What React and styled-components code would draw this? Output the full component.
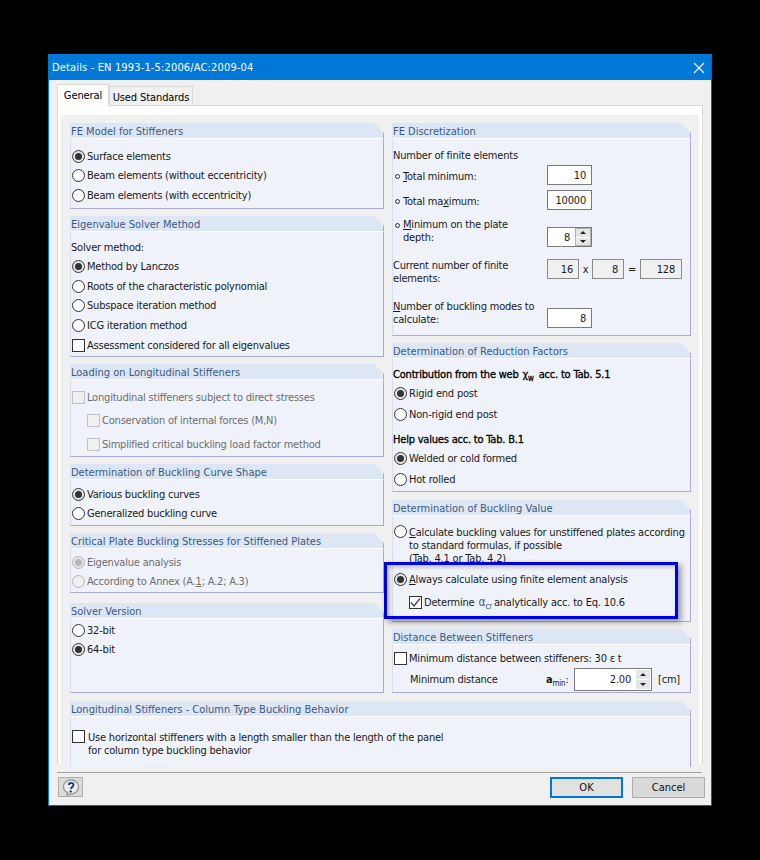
import React from 'react';
import styled, { createGlobalStyle } from 'styled-components';

const GlobalStyle = createGlobalStyle`
    html, body {
        margin: 0;
        background: #000;
        font-family: "DejaVu Sans Condensed", "Liberation Sans", Arial, sans-serif;
        font-size: 11px;
        color: #1a1a1a;
    }
`;

const Page = styled.div`
    padding: 54px 48px;
    width: 664px;
    height: 752px;
`;

const Dialog = styled.div`
    position: relative;
    box-sizing: border-box;
    width: 664px;
    height: 752px;
    background: #f0f0f0;
    border: 1px solid #0078d7;
    border-bottom-color: #1b5e96;
    border-right-color: #1b5e96;
    display: flex;
    flex-direction: column;
`;

const TitleBar = styled.div`
    height: 25px;
    background: #0078d7;
    color: #fff;
    display: flex;
    align-items: center;
    justify-content: space-between;
    padding: 0 5px 0 3px;
    flex-shrink: 0;
`;

const TitleText = styled.div`
    font-size: 11px;
    letter-spacing: 0.15px;
`;

const TabBar = styled.div`
    display: flex;
    align-items: flex-end;
    height: 25px;
    padding-left: 8px;
    flex-shrink: 0;
`;

const Tab = styled.div`
    box-sizing: border-box;
    display: flex;
    align-items: center;
    justify-content: center;
    white-space: nowrap;
    letter-spacing: -0.1px;
    border: 1px solid #d9d9d9;
    border-bottom: none;
    height: ${p => (p.$active ? '22px' : '19px')};
    width: ${p => (p.$active ? '52px' : '84px')};
    padding-top: ${p => (p.$active ? '0' : '2px')};
    background: ${p => (p.$active ? '#fff' : '#f0f0f0')};
    margin-bottom: ${p => (p.$active ? '-1px' : '0')};
    position: relative;
    z-index: ${p => (p.$active ? 1 : 0)};
    color: #000;
`;

const TabPane = styled.div`
    box-sizing: border-box;
    margin-left: 8px;
    width: 646px;
    height: 659px;
    background: #fff;
    border: 1px solid #d9d9d9;
    border-bottom: none;
    padding: 9px 3px 0;
    flex-shrink: 0;
`;

const PaneInner = styled.div`
    height: 650px;
    background: #f0f0f0;
    padding: 8px 8px 0 9px;
    box-sizing: border-box;
`;

const Columns = styled.div`
    display: flex;
    gap: 8px;
`;

const Column = styled.div`
    width: ${p => p.$width}px;
    display: flex;
    flex-direction: column;
`;

const GroupBox = styled.div`
    position: relative;
    box-sizing: border-box;
    height: ${p => p.$height}px;
    margin-bottom: ${p => p.$after ?? 7}px;
    display: flex;
    flex-direction: column;
`;

const GroupHeader = styled.div`
    box-sizing: border-box;
    height: 15px;
    flex-shrink: 0;
    background: linear-gradient(to left, #a9a9de 1px, #dce6f4 1px);
    clip-path: polygon(0 0, calc(100% - 10px) 0, 100% 10px, 100% 100%, 0 100%);
    color: #3a5a80;
    line-height: 17px;
    padding-left: 1px;
`;

const GroupBody = styled.div`
    flex: 1;
    box-sizing: border-box;
    background: #eff3f9;
    letter-spacing: -0.2px;
    border-top: 1px solid #fff;
    border-left: 1px solid #d5dff0;
    border-right: 1px solid #a9a9de;
    border-bottom: ${p => (p.$open ? 'none' : '1px solid #a9a9de')};
`;

const Row = styled.div`
    display: flex;
    align-items: ${p => (p.$top ? 'flex-start' : 'center')};
    height: ${p => p.$height ?? 18}px;
    margin-top: ${p => p.$mt ?? 0}px;
    margin-left: ${p => p.$indent ?? 0}px;
    color: ${p => (p.$disabled ? '#6d6d6d' : '#1a1a1a')};
    white-space: nowrap;
`;

const Lines = styled.div`
    line-height: 13px;
    white-space: nowrap;
    margin-left: ${p => p.$indent ?? 0}px;
`;

const BoldLabel = styled.span`
    color: #000;
    -webkit-text-stroke: 0.3px #000;
`;

const RadioCircle = styled.span`
    box-sizing: border-box;
    flex-shrink: 0;
    width: 13px;
    height: 13px;
    margin: ${p => (p.$raised ? '-1px' : '0')} 2px 0 1px;
    border-radius: 50%;
    border: 1px solid ${p => (p.$disabled ? '#b5b5b5' : '#333')};
    background: ${p => (p.$checked ? '#e6e6e6' : p.$disabled ? '#f0f0f0' : '#fff')};
    display: flex;
    align-items: center;
    justify-content: center;

    &::after {
        content: '';
        display: ${p => (p.$checked ? 'block' : 'none')};
        width: 7px;
        height: 7px;
        border-radius: 50%;
        background: ${p => (p.$disabled ? '#b5b5b5' : '#333')};
    }
`;

const CheckSquare = styled.span`
    box-sizing: border-box;
    flex-shrink: 0;
    width: 13px;
    height: 13px;
    margin: ${p => (p.$raised ? '-1px' : '0')} 2px 0 1px;
    border: 1px solid ${p => (p.$disabled ? '#c0c0c0' : '#333')};
    background: ${p => (p.$disabled ? '#f0f0f0' : '#fff')};
    display: flex;
    align-items: center;
    justify-content: center;
`;

const Bullet = styled.span`
    box-sizing: border-box;
    flex-shrink: 0;
    width: 5px;
    height: 5px;
    border: 1px solid #333;
    border-radius: 50%;
    margin: 0 3px 0 2px;
`;

const NumberBox = styled.div`
    box-sizing: border-box;
    position: relative;
    flex-shrink: 0;
    align-self: flex-end;
    width: ${p => p.$width}px;
    height: ${p => p.$height ?? 20}px;
    background: ${p => (p.$readOnly ? '#f0f0f0' : '#fff')};
    border: 1px solid ${p => (p.$readOnly ? '#8a8a8a' : '#7a7a7a')};
    display: flex;
    align-items: center;
    justify-content: flex-end;
    padding-right: ${p => p.$pad ?? 5}px;
    color: #1a1a1a;
`;

const Spinner = styled.div`
    position: absolute;
    top: 0;
    right: 0;
    bottom: 0;
    width: 16px;
    display: flex;
    flex-direction: column;
    gap: 1px;
    background: #fff;
    box-shadow: ${p => (p.$flat ? 'none' : 'inset 0 0 0 1px #b0b0b0')};
    padding: 1px;
    box-sizing: border-box;
`;

const SpinPart = styled.div`
    flex: 1;
    background: #e6e6e6;
    display: flex;
    align-items: center;
    justify-content: center;

    &::after {
        content: '';
        width: 0;
        height: 0;
        border-left: 3px solid transparent;
        border-right: 3px solid transparent;
        border-${p => (p.$up ? 'bottom' : 'top')}: 3px solid #222;
    }
`;

const FieldRow = styled.div`
    display: flex;
    align-items: ${p => (p.$top ? 'flex-start' : 'center')};
    justify-content: space-between;
    height: ${p => p.$height}px;
    margin-top: ${p => p.$mt ?? 0}px;
    padding-right: 98px;
`;

const FieldLabel = styled.div`
    display: flex;
    align-items: ${p => (p.$top ? 'flex-start' : 'center')};
    line-height: 13px;
    padding-top: ${p => (p.$top ? '0' : '2px')};
`;

const BulletTop = styled(Bullet)`
    margin-top: 5px;
`;

const TripleRow = styled.div`
    display: flex;
    align-items: flex-start;
    justify-content: space-between;
    height: 30px;
    margin-top: ${p => p.$mt ?? 0}px;
    padding-right: 8px;
`;

const TripleFields = styled.div`
    display: flex;
    align-items: center;
`;

const Operator = styled.span`
    width: ${p => p.$width}px;
    text-align: center;
`;

const Symbol = styled.span`
    color: ${p => p.$color ?? '#1a1a1a'};
    font-size: ${p => p.$size ?? 11}px;
    margin: 0 2px 0 1px;
`;

const Sub = styled.sub`
    font-size: 8px;
    line-height: 0;
`;

const Highlight = styled.div`
    position: absolute;
    left: -8px;
    top: 62px;
    width: 294px;
    height: 57px;
    box-sizing: border-box;
    border: 3px solid #0000e0;
    box-shadow: 3px 3px 6px rgba(0, 0, 0, 0.4), inset 2px 2px 4px rgba(0, 0, 0, 0.25);
    pointer-events: none;
`;

const MinDistanceRow = styled.div`
    display: flex;
    align-items: center;
    height: 23px;
    margin-top: 1px;
    padding-left: 17px;
`;

const MinLabel = styled.span`
    width: 136px;
`;

const MinSymbol = styled.span`
    width: 28px;
`;

const Unit = styled.span`
    margin-left: 6px;
`;

const Footer = styled.div`
    margin: 8px 9px 0 8px;
    border-top: 1px solid #a0a0a0;
    padding-top: 4px;
    display: flex;
    align-items: flex-start;
    justify-content: space-between;
`;

const HelpButton = styled.div`
    box-sizing: border-box;
    width: 25px;
    height: 20px;
    margin-left: 1px;
    background: #dadada;
    border: 1px solid #adadad;
    display: flex;
    align-items: center;
    justify-content: center;
`;

const FooterButtons = styled.div`
    display: flex;
    gap: 9px;
    margin-right: -3px;
`;

const DialogButton = styled.div`
    box-sizing: border-box;
    width: 73px;
    height: 21px;
    display: flex;
    align-items: center;
    justify-content: center;
    background: ${p => (p.$primary ? '#e1e1e1' : '#d9d9d9')};
    border: ${p => (p.$primary ? '2px solid #0078d7' : '1px solid #adadad')};
    color: #111;
`;

const CheckMark = () => (
    <svg width="11" height="11" viewBox="0 0 11 11">
        <path d="M1 5.5 L4 9 L10 1.5" fill="none" stroke="#444" strokeWidth="1.3" />
    </svg>
);

const CloseIcon = () => (
    <svg width="14" height="14" viewBox="0 0 14 14">
        <path d="M2 2 L12 12 M12 2 L2 12" stroke="#fff" strokeWidth="1.1" />
    </svg>
);

const HelpIcon = () => (
    <svg width="18" height="17" viewBox="0 0 18 17">
        <path d="M9 1 C13.5 1 16.5 4 16.5 8 C16.5 12 13 15 9 15 L5 16 L5.5 13.5 C3 12.5 1.5 10.5 1.5 8 C1.5 4 4.5 1 9 1 Z" fill="#eeeeee" stroke="#9a9a9a" strokeWidth="1.4" />
        <path d="M6.8 6 C6.8 3.5 11.5 3.2 11.5 5.8 C11.5 7.8 9.2 8 8.9 10" fill="none" stroke="#26407c" strokeWidth="2" />
        <circle cx="8.6" cy="12.4" r="1.2" fill="#26407c" />
    </svg>
);

const Radio = ({ checked, disabled, children, ...rest }) => (
    <Row $disabled={disabled} {...rest}>
        <RadioCircle $checked={checked} $disabled={disabled} />
        {children}
    </Row>
);

const Check = ({ checked, disabled, children, ...rest }) => (
    <Row $disabled={disabled} {...rest}>
        <CheckSquare $disabled={disabled}>{checked && <CheckMark />}</CheckSquare>
        {children}
    </Row>
);

const Group = ({ title, height, after, open, children }) => (
    <GroupBox $height={height} $after={after}>
        <GroupHeader>{title}</GroupHeader>
        <GroupBody $open={open}>{children}</GroupBody>
    </GroupBox>
);

const Spin = ({ flat }) => (
    <Spinner $flat={flat}>
        <SpinPart $up />
        <SpinPart />
    </Spinner>
);

const LeftColumn = () => (
    <Column $width={314}>
        <Group title="FE Model for Stiffeners" height={86}>
            <Radio checked $mt={8}>Surface elements</Radio>
            <Radio $mt={1}>Beam elements (without eccentricity)</Radio>
            <Radio $mt={2}>Beam elements (with eccentricity)</Radio>
        </Group>
        <Group title="Eigenvalue Solver Method" height={141}>
            <Row $mt={6}>Solver method:</Row>
            <Radio checked $mt={1}>Method by Lanczos</Radio>
            <Radio $mt={2}>Roots of the characteristic polynomial</Radio>
            <Radio $mt={1}>Subspace iteration method</Radio>
            <Radio $mt={2}>ICG iteration method</Radio>
            <Check $mt={2}>Assessment considered for all eigenvalues</Check>
        </Group>
        <Group title="Loading on Longitudinal Stiffeners" height={93}>
            <Check disabled $mt={8}>Lon<u>g</u>itudinal stiffeners subject to direct stresses</Check>
            <Check disabled $mt={5} $indent={15}>Conservation of internal forces (M,N)</Check>
            <Check disabled $mt={6} $indent={15}>Simplified critical buckling load factor method</Check>
        </Group>
        <Group title="Determination of Buckling Curve Shape" height={62}>
            <Radio checked $mt={5}>Various buckling curves</Radio>
            <Radio $mt={1}>Generalized buckling curve</Radio>
        </Group>
        <Group title="Critical Plate Buckling Stresses for Stiffened Plates" height={60} after={10}>
            <Radio checked disabled $mt={4}>Eigenvalue analysis</Radio>
            <Radio disabled $mt={1}>According to Annex (A.<u>1</u>; A.2; A.3)</Radio>
        </Group>
        <Group title="Solver Version" height={90} after={7}>
            <Radio $mt={2}>32-bit</Radio>
            <Radio checked $mt={1}>64-bit</Radio>
        </Group>
    </Column>
);

const RightColumn = () => (
    <Column $width={299}>
        <Group title="FE Discretization" height={213} after={7}>
            <Row $mt={7}>Number of finite elements</Row>
            <FieldRow $height={20} $mt={1}>
                <FieldLabel><Bullet /><span><u>T</u>otal minimum:</span></FieldLabel>
                <NumberBox $width={45}>10</NumberBox>
            </FieldRow>
            <FieldRow $height={20} $mt={5}>
                <FieldLabel><Bullet /><span>Total ma<u>x</u>imum:</span></FieldLabel>
                <NumberBox $width={45}>10000</NumberBox>
            </FieldRow>
            <FieldRow $height={29} $mt={8} $top>
                <FieldLabel $top>
                    <BulletTop />
                    <Lines><u>M</u>inimum on the plate<br />depth:</Lines>
                </FieldLabel>
                <NumberBox $width={45} $pad={21}>8<Spin /></NumberBox>
            </FieldRow>
            <TripleRow $mt={12}>
                <Lines>Current number of finite<br />elements:</Lines>
                <TripleFields>
                    <NumberBox $width={32} $readOnly>16</NumberBox>
                    <Operator $width={13}>x</Operator>
                    <NumberBox $width={32} $readOnly>8</NumberBox>
                    <Operator $width={16}>=</Operator>
                    <NumberBox $width={42} $pad={6} $readOnly>128</NumberBox>
                </TripleFields>
            </TripleRow>
            <FieldRow $height={28} $mt={11} $top>
                <Lines><u>N</u>umber of buckling modes to<br />calculate:</Lines>
                <NumberBox $width={45}>8</NumberBox>
            </FieldRow>
        </Group>
        <Group title="Determination of Reduction Factors" height={149} after={8}>
            <Row $mt={6}>
                <BoldLabel>Contribution from the web <Symbol>χ<Sub>w</Sub></Symbol> acc. to Tab. 5.1</BoldLabel>
            </Row>
            <Radio checked $mt={1}>Rigid end post</Radio>
            <Radio $mt={3}>Non-rigid end post</Radio>
            <Row $mt={7}><BoldLabel>Help values acc. to Tab. B.1</BoldLabel></Row>
            <Radio checked $mt={1}>Welded or cold formed</Radio>
            <Radio $mt={3}>Hot rolled</Radio>
        </Group>
        <Group title="Determination of Buckling Value" height={122}>
            <Row $height={39} $mt={10} $top>
                <RadioCircle $raised />
                <Lines>
                    <u>C</u>alculate buckling values for unstiffened plates according<br />
                    to standard formulas, if possible<br />
                    (Tab. 4.1 or Tab. 4.2)
                </Lines>
            </Row>
            <Radio checked $mt={5}><span><u>A</u>lways calculate using finite element analysis</span></Radio>
            <Check checked $mt={5} $indent={15}>
                <span>Determine <Symbol $color="#3a5a80" $size={12}>α<Sub>cr</Sub></Symbol>analytically acc. to Eq. 10.6</span>
            </Check>
            <Highlight />
        </Group>
        <Group title="Distance Between Stiffeners" height={64} after={8}>
            <Check $mt={4}>Minimum distance between stiffeners: 30 ε t</Check>
            <MinDistanceRow>
                <MinLabel>Minimum distance</MinLabel>
                <MinSymbol><b>a</b><Sub>min</Sub>:</MinSymbol>
                <NumberBox $width={78} $height={23} $pad={20}>2.00<Spin flat /></NumberBox>
                <Unit>[cm]</Unit>
            </MinDistanceRow>
        </Group>
    </Column>
);

const App = () => (
    <Page>
        <GlobalStyle />
        <Dialog>
            <TitleBar>
                <TitleText>Details - EN 1993-1-5:2006/AC:2009-04</TitleText>
                <CloseIcon />
            </TitleBar>
            <TabBar>
                <Tab $active>General</Tab>
                <Tab>Used Standards</Tab>
            </TabBar>
            <TabPane>
                <PaneInner>
                    <Columns>
                        <LeftColumn />
                        <RightColumn />
                    </Columns>
                    <Group title="Longitudinal Stiffeners - Column Type Buckling Behavior" height={66} after={0} open>
                        <Row $height={26} $mt={14} $top>
                            <CheckSquare $raised />
                            <Lines $indent={1}>
                                Use horizontal stiffeners with a length smaller than the length of the panel<br />
                                for column type buckling behavior
                            </Lines>
                        </Row>
                    </Group>
                </PaneInner>
            </TabPane>
            <Footer>
                <HelpButton><HelpIcon /></HelpButton>
                <FooterButtons>
                    <DialogButton $primary>OK</DialogButton>
                    <DialogButton>Cancel</DialogButton>
                </FooterButtons>
            </Footer>
        </Dialog>
    </Page>
);

export default App;
